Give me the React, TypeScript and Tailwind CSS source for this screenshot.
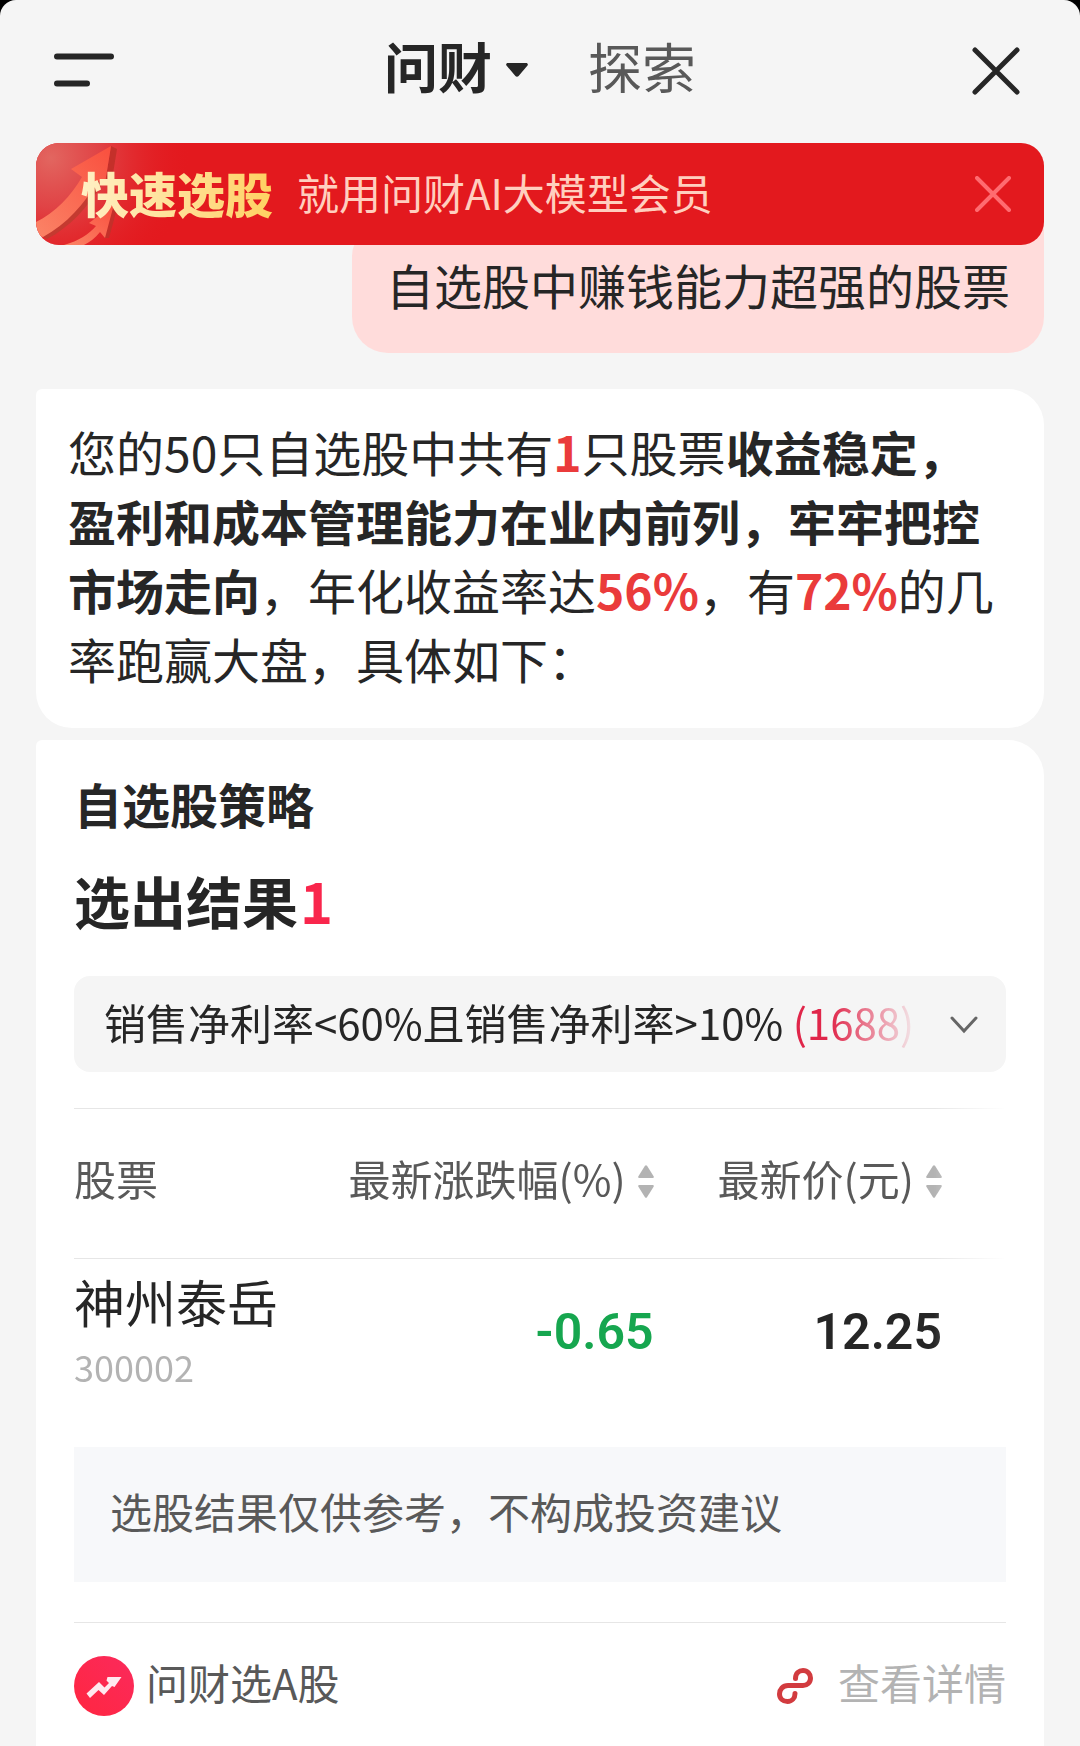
import React from "react";

function SortIcon() {
  return (
    <svg viewBox="0 0 16 33" className="mt-2 h-[33px] w-4 shrink-0 fill-[#b3b3b3]" aria-hidden="true">
      <path d="M7 .8a1.3 1.3 0 0 1 2 0l6.6 10.4c.5.9 0 1.8-1 1.8H1.4c-1 0-1.500-.9-1-1.800z" />
      <path d="M7 32.200a1.300 1.300 0 0 0 2 0l6.600-10.400c.5-.9 0-1.800-1-1.800H1.400c-1 0-1.500.9-1 1.800z" />
    </svg>
  );
}

function Header() {
  return (
    <header className="grid h-[143px] grid-cols-[1fr_auto_1fr] items-center px-[54px] pb-3 text-[54px] leading-[72px]">
      <button type="button" aria-label="菜单" className="justify-self-start pt-2">
        <svg viewBox="0 0 60 34" className="h-[34px] w-[60px]" stroke="#262626" strokeWidth="6" strokeLinecap="round">
          <path d="M3 3.500H57M3 30.500H33" />
        </svg>
      </button>
      <nav className="flex items-center gap-[60px]">
        <button type="button" className="flex items-center gap-3.5 font-bold">
          问财
          <svg viewBox="0 0 22 14" className="mt-2 h-3.5 w-[22px] fill-[#262626]" aria-hidden="true">
            <path d="M2 0h18c1.800 0 2.400 1.600 1.300 2.800L12.600 12.900a2 2 0 0 1-3.200 0L.7 2.800C-.4 1.600.2 0 2 0z" />
          </svg>
        </button>
        <button type="button" className="text-[#595959]">探索</button>
      </nav>
      <button type="button" aria-label="关闭" className="justify-self-end pt-2.5 pr-1.5">
        <svg viewBox="0 0 48 48" className="size-12" stroke="#262626" strokeWidth="5" strokeLinecap="round">
          <path d="M3 3L45 45M45 3L3 45" />
        </svg>
      </button>
    </header>
  );
}

function Banner() {
  return (
    <aside className="relative z-10 flex h-[102px] items-center overflow-hidden rounded-[23px] bg-[#e3191e] pr-[33px] pl-[45px]">
      <svg viewBox="0 0 170 102" className="absolute top-0 left-0 h-full w-[170px]" aria-hidden="true">
        <defs>
          <radialGradient id="glow" gradientUnits="userSpaceOnUse" cx="15" cy="15" r="140">
            <stop offset="0" stopColor="#e26660" />
            <stop offset=".35" stopColor="#e0484a" stopOpacity=".9" />
            <stop offset="1" stopColor="#e3191e" stopOpacity="0" />
          </radialGradient>
          <linearGradient id="arrow" x1="1" y1="0" x2="0" y2="1">
            <stop offset="0" stopColor="#f94f3e" />
            <stop offset="1" stopColor="#fb8467" />
          </linearGradient>
        </defs>
        <rect width="170" height="102" fill="url(#glow)" />
        <path d="M75 3L81 6L75 43L69 40z" fill="#c4302a" />
        <path d="M62 38L66 41C52 64 34 84 11 96L7 94z" fill="#c43a30" />
        <path d="M0 79C19 70 35 53 46 34L35 26L75 3L69 40L62 38C48 61 31 81 7 94L0 92z" fill="url(#arrow)" />
        <path d="M78 61L82 62L73 95L68 95z" fill="#c4302a" />
        <path d="M28 102C43 98 53 91 60 83L53 80L78 61L69 95L64 89C59 95 54 99 48 102z" fill="url(#arrow)" />
      </svg>
      <strong className="relative bg-gradient-to-r from-[#fff0c4] to-[#ffd060] bg-clip-text pb-1 text-[48px] leading-[68px] font-black text-transparent">
        快速选股
      </strong>
      <span className="relative ml-6 pb-1 text-[42px] leading-[64px] text-[#ffcfbf]">就用问财AI大模型会员</span>
      <button type="button" aria-label="关闭广告" className="relative ml-auto">
        <svg viewBox="0 0 36 36" className="size-9" stroke="#ff6b70" strokeWidth="4" strokeLinecap="round">
          <path d="M2 2L34 34M34 2L2 34" />
        </svg>
      </button>
    </aside>
  );
}

function Answer() {
  return (
    <section className="mt-9 rounded-[36px] rounded-tl-md bg-white pt-7 pr-10 pb-[35px] pl-8">
      <p className="text-[48px] leading-[69px]">
        您的50只自选股中共有<b className="text-[#ea3b3b]">1</b>只股票
        <b>收益稳定，盈利和成本管理能力在业内前列，牢牢把控市场走向</b>，年化收益率达
        <b className="text-[#ea3b3b]">56%</b>，有<b className="text-[#ea3b3b]">72%</b>的几率跑赢大盘，具体如下：
      </p>
    </section>
  );
}

function StockTable() {
  return (
    <div className="mt-9 [mask-image:linear-gradient(to_right,#000_calc(100%-72px),transparent)]">
      <table className="w-full border-collapse whitespace-nowrap">
        <thead>
          <tr className="h-[150px] border-y border-[#e6e6e6] text-[42px] leading-[60px] text-[#595959]">
            <th scope="col" className="w-full p-0 pb-3 text-left font-normal">股票</th>
            <th scope="col" className="p-0 pb-3 font-normal">
              <button type="button" className="flex items-center gap-3">最新涨跌幅(%)<SortIcon /></button>
            </th>
            <th scope="col" className="p-0 pr-16 pb-3 pl-16 font-normal">
              <button type="button" className="flex items-center gap-3">最新价(元)<SortIcon /></button>
            </th>
          </tr>
        </thead>
        <tbody>
          <tr className="h-[148px]">
            <td className="p-0 pb-1.5">
              <div className="text-[51px] leading-[72px]">神州泰岳</div>
              <div className="text-[36px] leading-[58px] text-[#b3b3b3]">300002</div>
            </td>
            <td className="p-0 text-right font-['Roboto',sans-serif] text-[50px] font-semibold text-[#16a64f]">-0.65</td>
            <td className="p-0 pr-16 text-right font-['Roboto',sans-serif] text-[50px] font-semibold">12.25</td>
          </tr>
        </tbody>
      </table>
    </div>
  );
}

function Results() {
  return (
    <section className="mt-3 grow rounded-t-[36px] rounded-tl-md bg-white px-[38px] pt-7">
      <h2 className="text-[48px] leading-[70px] font-bold">自选股策略</h2>
      <h3 className="mt-5 text-[56px] leading-[84px] font-bold">
        选出结果<span className="ml-0.5 text-[#f9264c]">1</span>
      </h3>
      <button
        type="button"
        aria-expanded="false"
        className="mt-[34px] flex h-24 w-full items-center gap-[30px] rounded-2xl bg-[#f5f5f5] pr-7 pb-1 pl-[30px] text-left text-[42px] leading-[62px]"
      >
        <span className="grow overflow-hidden whitespace-nowrap [mask-image:linear-gradient(to_right,#000_calc(100%-90px),transparent)]">
          销售净利率&lt;60%且销售净利率&gt;10% <span className="text-[#e0264a]">(1688)</span>
        </span>
        <svg viewBox="0 0 28 18" className="mt-1.5 h-[18px] w-7 shrink-0" fill="none" stroke="#666" strokeWidth="3" strokeLinecap="round" aria-hidden="true">
          <path d="M2 2L14 15L26 2" />
        </svg>
      </button>
      <StockTable />
      <p className="mt-10 bg-[#f7f8fa] px-9 pt-8 pb-10 text-[42px] leading-[63px] text-[#595959]">选股结果仅供参考，不构成投资建议</p>
      <footer className="mt-10 flex items-center border-t border-[#e6e6e6] pt-7 pb-6 text-[42px] leading-[62px]">
        <svg viewBox="0 0 60 60" className="size-[60px]" aria-hidden="true">
          <defs>
            <linearGradient id="badge" x1="1" y1="0" x2="0" y2="1">
              <stop offset="0" stopColor="#fb2a5c" />
              <stop offset="1" stopColor="#ff2640" />
            </linearGradient>
          </defs>
          <circle cx="30" cy="30" r="30" fill="url(#badge)" />
          <path d="M12.500 37.500L25 26L30.500 31.500L35 27L32.500 24.500L33.500 21H47.500L40.500 31L38 30L30 39L24.500 34L16 42z" fill="#ffe9ef" />
        </svg>
        <span className="ml-3 pb-2 text-[#595959]">问财选A股</span>
        <a href="#details" className="ml-auto flex items-center gap-[25px] text-[#b3b3b3]">
          <svg viewBox="0 0 36 36" className="size-9" fill="none" stroke="#d23b3f" strokeWidth="5" strokeLinecap="round" aria-hidden="true">
            <path d="M18.500 10.500C18.500 5.500 22 2.500 26 2.500C30.500 2.500 33.500 6 33.500 10C33.500 14.500 30 17.500 26 17.500H11C6 17.500 2.500 21.500 2.500 26C2.500 30.500 6 33.500 10.500 33.500C15 33.500 18 30 18 25.500" />
          </svg>
          <span className="pb-2">查看详情</span>
        </a>
      </footer>
    </section>
  );
}

export default function App() {
  return (
    <div lang="zh-CN" className="min-h-screen bg-black font-['Noto_Sans_CJK_SC',sans-serif] text-[#262626]">
      <div className="flex min-h-screen flex-col rounded-t-2xl bg-[#f5f5f5]">
        <Header />
        <main className="flex grow flex-col px-9">
          <Banner />
          <p className="-mt-6 self-end rounded-[36px] rounded-tr-md bg-[#ffdcdb] px-[34px] pt-7 pb-[34px] text-[48px] leading-[70px]">
            自选股中赚钱能力超强的股票
          </p>
          <Answer />
          <Results />
        </main>
      </div>
    </div>
  );
}
